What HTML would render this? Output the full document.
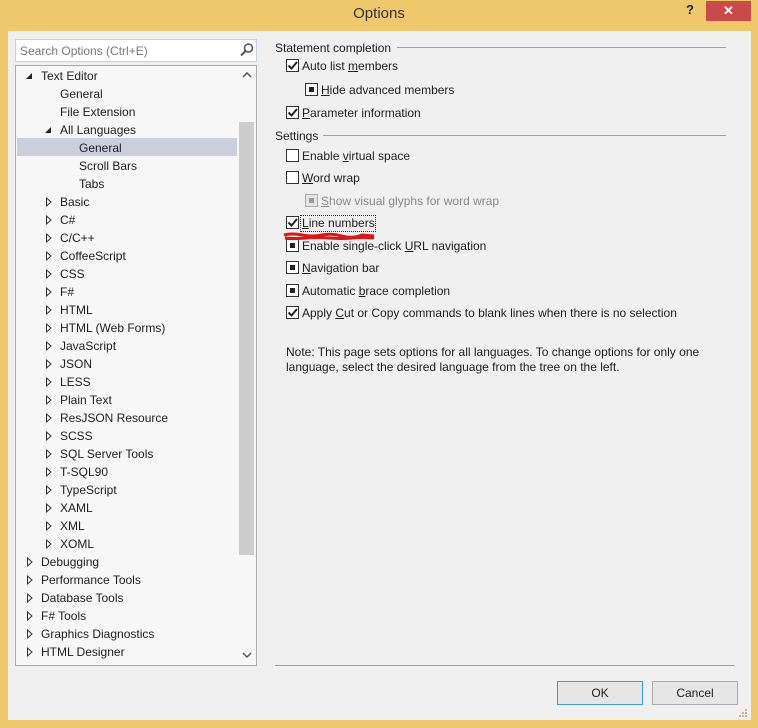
<!DOCTYPE html>
<html><head><style>
*{margin:0;padding:0;box-sizing:border-box}
body{width:758px;height:728px;background:#f0c86c;font-family:"Liberation Sans",sans-serif;font-size:12px;color:#1e1e1e;position:relative;overflow:hidden}
.a{position:absolute;white-space:nowrap}
.client{position:absolute;left:8px;top:31px;width:743px;height:689px;background:#f0f0f0}
.t{position:absolute;line-height:18px;height:18px;white-space:nowrap}
.cb{position:absolute;width:13px;height:13px;border:1px solid #333;background:#fff}
.cb.ind::after{content:"";position:absolute;left:3px;top:3px;width:5px;height:5px;background:#222}
.cb.dis{border-color:#aaa;background:#e6e6e6}
.cb.dis::after{background:#999}
.lbl{position:absolute;line-height:16px;white-space:nowrap}
u{text-decoration:underline}
</style></head><body>
<div class="a" style="left:0;top:5px;width:758px;text-align:center;font-size:15px;color:#333">Options</div>
<div class="a" style="left:686px;top:2px;font-size:13px;font-weight:bold;color:#222">?</div>
<div class="a" style="left:706px;top:1px;width:45px;height:20px;background:#c74b4b;color:#fff;text-align:center;font-size:13px;line-height:20px;font-weight:bold">✕</div>
<div class="client"></div>

<div class="a" style="left:15px;top:39px;width:242px;height:23px;background:#fff;border:1px solid #c8d0e0"></div>
<div class="a" style="left:20px;top:44px;color:#777">Search Options (Ctrl+E)</div>
<svg class="a" style="left:239px;top:42px" width="16" height="16"><circle cx="9.5" cy="6" r="4" fill="none" stroke="#555" stroke-width="1.6"/><line x1="6.5" y1="9" x2="2" y2="13.5" stroke="#555" stroke-width="2"/></svg>

<div class="a" style="left:15px;top:65px;width:242px;height:601px;background:#f7f7f7;border:1px solid #aaa"></div>
<div class="a" style="left:17px;top:138px;width:220px;height:18px;background:#cccedb"></div>
<div class="a" style="left:239px;top:122px;width:15px;height:433px;background:#cdcdcd"></div>
<svg class="a" style="left:242px;top:71px" width="10" height="8"><polyline points="1,6 5,2 9,6" fill="none" stroke="#555" stroke-width="1.5"/></svg>
<svg class="a" style="left:242px;top:651px" width="10" height="8"><polyline points="1,2 5,6 9,2" fill="none" stroke="#555" stroke-width="1.5"/></svg>
<div id="tree"></div>

<div class="lbl" style="left:275px;top:40px">Statement completion</div>
<div class="a" style="left:397px;top:47px;width:329px;height:1px;background:#a0a0a0"></div>
<div class="lbl" style="left:275px;top:128px">Settings</div>
<div class="a" style="left:323px;top:135px;width:403px;height:1px;background:#a0a0a0"></div>

<div id="opts"></div>

<svg class="a" style="left:282px;top:231px" width="96" height="12"><path d="M2,4 Q10,2 20,4 T40,4 T60,5 T80,4 L92,5 M3,7 Q12,8 24,7 T48,7 T70,7 T92,7" stroke="#e21515" stroke-width="3" fill="none"/></svg>
<div class="a" style="left:300px;top:215px;width:76px;height:17px;border:1px dotted #333"></div>

<div class="lbl" style="left:286px;top:344px">Note: This page sets options for all languages. To change options for only one</div>
<div class="lbl" style="left:286px;top:359px">language, select the desired language from the tree on the left.</div>

<div class="a" style="left:275px;top:665px;width:460px;height:1px;background:#a0a0a0"></div>
<div class="a" style="left:557px;top:681px;width:86px;height:24px;border:1px solid #3c9ae8;background:#e6e6e6;text-align:center;line-height:22px">OK</div>
<div class="a" style="left:652px;top:681px;width:86px;height:24px;border:1px solid #adadad;background:#e6e6e6;text-align:center;line-height:22px">Cancel</div>

<script>
var items=[[0,'e','Text Editor'],[1,'','General'],[1,'','File Extension'],[1,'e','All Languages'],[2,'','General'],[2,'','Scroll Bars'],[2,'','Tabs'],
[1,'c','Basic'],[1,'c','C#'],[1,'c','C/C++'],[1,'c','CoffeeScript'],[1,'c','CSS'],[1,'c','F#'],[1,'c','HTML'],[1,'c','HTML (Web Forms)'],[1,'c','JavaScript'],[1,'c','JSON'],[1,'c','LESS'],[1,'c','Plain Text'],[1,'c','ResJSON Resource'],[1,'c','SCSS'],[1,'c','SQL Server Tools'],[1,'c','T-SQL90'],[1,'c','TypeScript'],[1,'c','XAML'],[1,'c','XML'],[1,'c','XOML'],
[0,'c','Debugging'],[0,'c','Performance Tools'],[0,'c','Database Tools'],[0,'c','F# Tools'],[0,'c','Graphics Diagnostics'],[0,'c','HTML Designer']];
var h='';
items.forEach(function(it,i){var y=67+i*18,x=41+it[0]*19;
h+='<div class="t" style="left:'+x+'px;top:'+y+'px">'+it[2]+'</div>';
if(it[1]=='e')h+='<svg class="a" style="left:'+(x-16)+'px;top:'+(y+5)+'px" width="8" height="8"><polygon points="7,1 7,7 1,7" fill="#222"/></svg>';
if(it[1]=='c')h+='<svg class="a" style="left:'+(x-15)+'px;top:'+(y+4)+'px" width="8" height="10"><polygon points="1.5,1 6,5 1.5,9" fill="none" stroke="#333"/></svg>';
});
document.getElementById('tree').innerHTML=h;
var o=[[286,65,'c','Auto list <u>m</u>embers'],[305,89,'i','<u>H</u>ide advanced members'],[286,112,'c','<u>P</u>arameter information'],
[286,155,'','Enable <u>v</u>irtual space'],[286,177,'','<u>W</u>ord wrap'],[305,200,'d','<u>S</u>how visual glyphs for word wrap'],[286,222,'c','<u>L</u>ine numbers'],
[286,245,'i','Enable single-click <u>U</u>RL navigation'],[286,267,'i','<u>N</u>avigation bar'],[286,290,'i','Automatic <u>b</u>race completion'],[286,312,'c','Apply <u>C</u>ut or Copy commands to blank lines when there is no selection']];
h='';
o.forEach(function(r){var cls='cb'+(r[2]=='i'?' ind':'')+(r[2]=='d'?' ind dis':'');
h+='<div class="'+cls+'" style="left:'+r[0]+'px;top:'+(r[1]-6)+'px">'+(r[2]=='c'?'<svg width="11" height="11" style="position:absolute;left:0;top:0"><polyline points="1.5,5.5 4.5,8.5 10,2" fill="none" stroke="#222" stroke-width="2"/></svg>':'')+'</div>';
h+='<div class="lbl" style="left:'+(r[0]+16)+'px;top:'+(r[1]-7)+'px;'+(r[2]=='d'?'color:#8a8a8a':'')+'">'+r[3]+'</div>';});
document.getElementById('opts').innerHTML=h;
</script>
<svg class="a" style="left:738px;top:708px" width="10" height="10" fill="#bbb"><rect x="7" y="1" width="2" height="2"/><rect x="4" y="4" width="2" height="2"/><rect x="7" y="4" width="2" height="2"/><rect x="1" y="7" width="2" height="2"/><rect x="4" y="7" width="2" height="2"/><rect x="7" y="7" width="2" height="2"/></svg>
</body></html>
